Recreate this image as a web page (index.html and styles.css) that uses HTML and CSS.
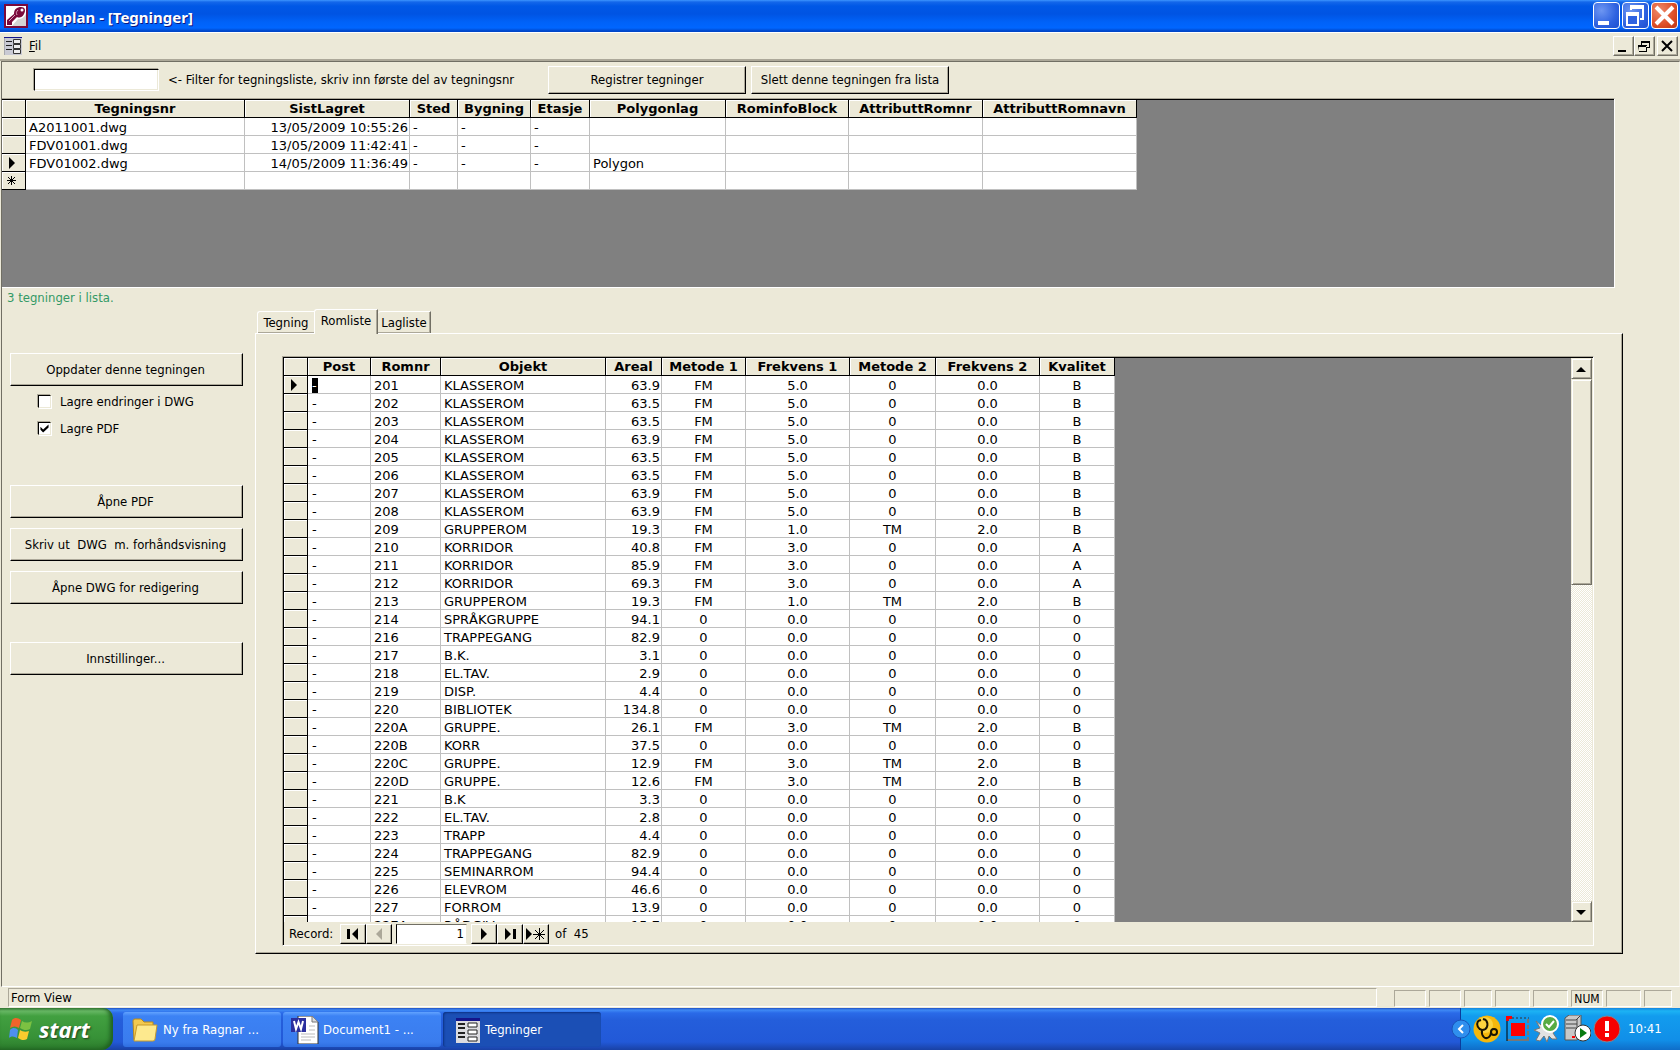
FILE: index.html
```
<!DOCTYPE html>
<html lang="no">
<head>
<meta charset="utf-8">
<title>Renplan - [Tegninger]</title>
<link rel="stylesheet" href="styles.css">
</head>
<body>
<header class="titlebar">
  <svg class="app-icon" viewBox="0 0 24 24" aria-hidden="true"><rect width="24" height="24" fill="#7b0a3c"/><rect x="2" y="2" width="20" height="20" fill="#fff"/><path d="M22 9V22H8L14 15C18 15 21 13 22 9Z" fill="#d4d4d4"/><path d="M3 21V16L10 10C10 5 13 3 17 3C21 3 22 6 20 10C18 14 15 14 13 13L8 18V21Z" fill="#7b0a3c"/><path d="M5 17L11 11M14 6C12 8 12 9 13 11" stroke="#d9a3bb" fill="none"/><circle cx="18" cy="6" r="1.500" fill="#fff"/></svg>
  <h1 class="title">Renplan - [Tegninger]</h1>
  <div class="window-controls">
    <button class="xp-btn" aria-label="Minimize"><svg viewBox="0 0 27 27"><path d="M5 19h11v4H5z" fill="#fff"/></svg></button>
    <button class="xp-btn" aria-label="Restore"><svg viewBox="0 0 27 27"><path d="M9 8V5h12v12h-3" fill="none" stroke="#fff" stroke-width="2"/><path d="M8 3h14v4H8z" fill="#fff"/><rect x="5" y="12" width="11" height="11" fill="#2f62e0" stroke="#fff" stroke-width="2"/><path d="M4 10h13v4H4z" fill="#fff"/></svg></button>
    <button class="xp-btn xp-close" aria-label="Close"><svg viewBox="0 0 27 27"><path d="M5 5L22 22M22 5L5 22" stroke="#fff" stroke-width="4"/></svg></button>
  </div>
</header>
<nav class="menubar">
  <svg class="form-icon" viewBox="0 0 18 18" aria-hidden="true"><rect width="18" height="18" fill="#c9cad4"/><path d="M0 0h18v1H0z" fill="#15158a"/><path d="M0 1v17" stroke="#888"/><path d="M2 4.500h6M2 8.500h6M2 12.500h6" stroke="#222"/><path d="M9.500 2.500h7v4h-7zM9.500 7.500h7v4h-7zM9.500 12.500h7v4h-7z" fill="#eee" stroke="#333"/></svg>
  <a class="menu-item" href="#"><u>F</u>il</a>
  <div class="mdi-controls">
    <button class="mdi-btn" aria-label="Minimize document"><svg viewBox="0 0 20 18"><path d="M4 13h8v2H4z"/></svg></button>
    <button class="mdi-btn" aria-label="Restore document"><svg viewBox="0 0 20 18"><path d="M6 4h9v2H6zM14 5h1v6h-3v-1h2zM6 5h1v4H6zM3 8h9v2H3zM3 9h1v6h8V9h-1v5H4z"/></svg></button>
    <button class="mdi-btn mdi-close" aria-label="Close document"><svg viewBox="0 0 20 18"><path d="M4 4L14 14M14 4L4 14" stroke="#000" stroke-width="2"/></svg></button>
  </div>
</nav>
<main class="form">
  <div class="filterbar">
    <input class="filter-input" id="filter" type="text">
    <label class="filter-label" for="filter">&lt;- Filter for tegningsliste, skriv inn første del av tegningsnr</label>
    <button class="btn filter-btn">Registrer tegninger</button>
    <button class="btn filter-btn">Slett denne tegningen fra lista</button>
  </div>
  <section class="sub sub-top">
    <div class="sub-inner">
      <table class="grid grid-top">
        <colgroup><col class="w24"><col class="w219"><col class="w165"><col class="w48"><col class="w73"><col class="w59"><col class="w136"><col class="w123"><col class="w134"><col class="w154"></colgroup>
        <thead><tr><th></th><th>Tegningsnr</th><th>SistLagret</th><th>Sted</th><th>Bygning</th><th>Etasje</th><th>Polygonlag</th><th>RominfoBlock</th><th>AttributtRomnr</th><th>AttributtRomnavn</th></tr></thead>
        <tbody>
          <tr><td class="sel"></td><td>A2011001.dwg</td><td class="num">13/05/2009 10:55:26</td><td>-</td><td>-</td><td>-</td><td></td><td></td><td></td><td></td></tr>
          <tr><td class="sel"></td><td>FDV01001.dwg</td><td class="num">13/05/2009 11:42:41</td><td>-</td><td>-</td><td>-</td><td></td><td></td><td></td><td></td></tr>
          <tr><td class="sel"><svg class="mark" viewBox="0 0 12 12"><path d="M3 0L9 6L3 12Z"/></svg></td><td>FDV01002.dwg</td><td class="num">14/05/2009 11:36:49</td><td>-</td><td>-</td><td>-</td><td>Polygon</td><td></td><td></td><td></td></tr>
          <tr><td class="sel"><svg class="mark" viewBox="0 0 12 12"><path d="M5.500 1V10M1 5.500H10M2 2L9 9M9 2L2 9" stroke="#000"/></svg></td><td></td><td></td><td></td><td></td><td></td><td></td><td></td><td></td><td></td></tr>
        </tbody>
      </table>
    </div>
  </section>
  <p class="count">3 tegninger i lista.</p>
  <div class="workspace">
    <aside class="actions">
      <button class="btn action">Oppdater denne tegningen</button>
      <div class="checks">
        <label class="check"><input type="checkbox">Lagre endringer i DWG</label>
        <label class="check"><input type="checkbox" checked>Lagre PDF</label>
      </div>
      <div class="stack">
        <button class="btn action">Åpne PDF</button>
        <button class="btn action">Skriv ut&nbsp; DWG&nbsp; m. forhåndsvisning</button>
        <button class="btn action">Åpne DWG for redigering</button>
      </div>
      <button class="btn action">Innstillinger...</button>
    </aside>
    <section class="tabbed">
      <div class="tabs" role="tablist">
        <button class="tab" role="tab">Tegning</button>
        <button class="tab tab-active" role="tab" aria-selected="true">Romliste</button>
        <button class="tab tab-last" role="tab">Lagliste</button>
      </div>
      <div class="panel">
        <div class="sub sub-main">
          <div class="sub-inner">
            <div class="list">
              <div class="list-view">
                <table class="grid grid-rooms">
                  <colgroup><col class="w24"><col class="w63"><col class="w70"><col class="w165"><col class="w56"><col class="w84"><col class="w104"><col class="w86"><col class="w104"><col class="w75"></colgroup>
                  <thead><tr><th></th><th>Post</th><th>Romnr</th><th>Objekt</th><th>Areal</th><th>Metode 1</th><th>Frekvens 1</th><th>Metode 2</th><th>Frekvens 2</th><th>Kvalitet</th></tr></thead>
                  <tbody>
                    <tr><td class="sel"><svg class="mark" viewBox="0 0 12 12"><path d="M3 0L9 6L3 12Z"/></svg></td><td><span class="picked">-</span></td><td>201</td><td>KLASSEROM</td><td>63.9</td><td>FM</td><td>5.0</td><td>0</td><td>0.0</td><td>B</td></tr>
                    <tr><td class="sel"></td><td>-</td><td>202</td><td>KLASSEROM</td><td>63.5</td><td>FM</td><td>5.0</td><td>0</td><td>0.0</td><td>B</td></tr>
                    <tr><td class="sel"></td><td>-</td><td>203</td><td>KLASSEROM</td><td>63.5</td><td>FM</td><td>5.0</td><td>0</td><td>0.0</td><td>B</td></tr>
                    <tr><td class="sel"></td><td>-</td><td>204</td><td>KLASSEROM</td><td>63.9</td><td>FM</td><td>5.0</td><td>0</td><td>0.0</td><td>B</td></tr>
                    <tr><td class="sel"></td><td>-</td><td>205</td><td>KLASSEROM</td><td>63.5</td><td>FM</td><td>5.0</td><td>0</td><td>0.0</td><td>B</td></tr>
                    <tr><td class="sel"></td><td>-</td><td>206</td><td>KLASSEROM</td><td>63.5</td><td>FM</td><td>5.0</td><td>0</td><td>0.0</td><td>B</td></tr>
                    <tr><td class="sel"></td><td>-</td><td>207</td><td>KLASSEROM</td><td>63.9</td><td>FM</td><td>5.0</td><td>0</td><td>0.0</td><td>B</td></tr>
                    <tr><td class="sel"></td><td>-</td><td>208</td><td>KLASSEROM</td><td>63.9</td><td>FM</td><td>5.0</td><td>0</td><td>0.0</td><td>B</td></tr>
                    <tr><td class="sel"></td><td>-</td><td>209</td><td>GRUPPEROM</td><td>19.3</td><td>FM</td><td>1.0</td><td>TM</td><td>2.0</td><td>B</td></tr>
                    <tr><td class="sel"></td><td>-</td><td>210</td><td>KORRIDOR</td><td>40.8</td><td>FM</td><td>3.0</td><td>0</td><td>0.0</td><td>A</td></tr>
                    <tr><td class="sel"></td><td>-</td><td>211</td><td>KORRIDOR</td><td>85.9</td><td>FM</td><td>3.0</td><td>0</td><td>0.0</td><td>A</td></tr>
                    <tr><td class="sel"></td><td>-</td><td>212</td><td>KORRIDOR</td><td>69.3</td><td>FM</td><td>3.0</td><td>0</td><td>0.0</td><td>A</td></tr>
                    <tr><td class="sel"></td><td>-</td><td>213</td><td>GRUPPEROM</td><td>19.3</td><td>FM</td><td>1.0</td><td>TM</td><td>2.0</td><td>B</td></tr>
                    <tr><td class="sel"></td><td>-</td><td>214</td><td>SPRÅKGRUPPE</td><td>94.1</td><td>0</td><td>0.0</td><td>0</td><td>0.0</td><td>0</td></tr>
                    <tr><td class="sel"></td><td>-</td><td>216</td><td>TRAPPEGANG</td><td>82.9</td><td>0</td><td>0.0</td><td>0</td><td>0.0</td><td>0</td></tr>
                    <tr><td class="sel"></td><td>-</td><td>217</td><td>B.K.</td><td>3.1</td><td>0</td><td>0.0</td><td>0</td><td>0.0</td><td>0</td></tr>
                    <tr><td class="sel"></td><td>-</td><td>218</td><td>EL.TAV.</td><td>2.9</td><td>0</td><td>0.0</td><td>0</td><td>0.0</td><td>0</td></tr>
                    <tr><td class="sel"></td><td>-</td><td>219</td><td>DISP.</td><td>4.4</td><td>0</td><td>0.0</td><td>0</td><td>0.0</td><td>0</td></tr>
                    <tr><td class="sel"></td><td>-</td><td>220</td><td>BIBLIOTEK</td><td>134.8</td><td>0</td><td>0.0</td><td>0</td><td>0.0</td><td>0</td></tr>
                    <tr><td class="sel"></td><td>-</td><td>220A</td><td>GRUPPE.</td><td>26.1</td><td>FM</td><td>3.0</td><td>TM</td><td>2.0</td><td>B</td></tr>
                    <tr><td class="sel"></td><td>-</td><td>220B</td><td>KORR</td><td>37.5</td><td>0</td><td>0.0</td><td>0</td><td>0.0</td><td>0</td></tr>
                    <tr><td class="sel"></td><td>-</td><td>220C</td><td>GRUPPE.</td><td>12.9</td><td>FM</td><td>3.0</td><td>TM</td><td>2.0</td><td>B</td></tr>
                    <tr><td class="sel"></td><td>-</td><td>220D</td><td>GRUPPE.</td><td>12.6</td><td>FM</td><td>3.0</td><td>TM</td><td>2.0</td><td>B</td></tr>
                    <tr><td class="sel"></td><td>-</td><td>221</td><td>B.K</td><td>3.3</td><td>0</td><td>0.0</td><td>0</td><td>0.0</td><td>0</td></tr>
                    <tr><td class="sel"></td><td>-</td><td>222</td><td>EL.TAV.</td><td>2.8</td><td>0</td><td>0.0</td><td>0</td><td>0.0</td><td>0</td></tr>
                    <tr><td class="sel"></td><td>-</td><td>223</td><td>TRAPP</td><td>4.4</td><td>0</td><td>0.0</td><td>0</td><td>0.0</td><td>0</td></tr>
                    <tr><td class="sel"></td><td>-</td><td>224</td><td>TRAPPEGANG</td><td>82.9</td><td>0</td><td>0.0</td><td>0</td><td>0.0</td><td>0</td></tr>
                    <tr><td class="sel"></td><td>-</td><td>225</td><td>SEMINARROM</td><td>94.4</td><td>0</td><td>0.0</td><td>0</td><td>0.0</td><td>0</td></tr>
                    <tr><td class="sel"></td><td>-</td><td>226</td><td>ELEVROM</td><td>46.6</td><td>0</td><td>0.0</td><td>0</td><td>0.0</td><td>0</td></tr>
                    <tr><td class="sel"></td><td>-</td><td>227</td><td>FORROM</td><td>13.9</td><td>0</td><td>0.0</td><td>0</td><td>0.0</td><td>0</td></tr>
                    <tr><td class="sel"></td><td></td><td>227A</td><td>RÅDGIV.</td><td>15.7</td><td>0</td><td>0.0</td><td>0</td><td>0.0</td><td>0</td></tr>
                  </tbody>
                </table>
              </div>
              <div class="scrollbar">
                <button class="scroll-btn" aria-label="Scroll up"><svg viewBox="0 0 10 10"><path d="M5 3L10 8H0Z"/></svg></button>
                <div class="thumb"></div>
                <div class="track"></div>
                <button class="scroll-btn" aria-label="Scroll down"><svg viewBox="0 0 10 10"><path d="M5 8L10 3H0Z"/></svg></button>
              </div>
            </div>
            <div class="record-nav">
              <label class="record-label" for="record">Record:</label>
              <button class="nav-btn" aria-label="First"><svg viewBox="0 0 20 14"><path d="M4 2h3v10H4zM15 1v12L9 7z"/></svg></button>
              <button class="nav-btn" aria-label="Previous" disabled><svg viewBox="0 0 20 14"><path d="M13 1v12L7 7z" fill="#aca899"/></svg></button>
              <input class="record-input" id="record" type="text" value="1">
              <button class="nav-btn" aria-label="Next"><svg viewBox="0 0 20 14"><path d="M7 1v12L13 7z"/></svg></button>
              <button class="nav-btn" aria-label="Last"><svg viewBox="0 0 20 14"><path d="M5 1v12L11 7zM13 2h3v10h-3z"/></svg></button>
              <button class="nav-btn" aria-label="New record"><svg viewBox="0 0 20 14"><path d="M0 1v12L6 7z"/><path d="M13.500 1v12M7 7.500h12M9 3l9 9M18 3l-9 9" stroke="#000"/></svg></button>
              <span class="record-total">of&nbsp; 45</span>
            </div>
          </div>
        </div>
      </div>
    </section>
  </div>
</main>
<footer class="statusbar">
  <div class="status-text">Form View</div>
  <div class="status-cells"><span class="cell"></span><span class="cell"></span><span class="cell cell-narrow"></span><span class="cell cell-wide"></span><span class="cell cell-wide"></span><span class="cell">NUM</span><span class="cell cell-wide"></span><span class="cell cell-narrow"></span></div>
</footer>
<div class="taskbar">
  <button class="start"><svg class="flag" viewBox="0 0 24 26" aria-hidden="true"><path d="M3 4C6 1 9 2 12 4L10 12C7 10 4 10 1 12Z" fill="#f0642b"/><path d="M13 5C16 7 19 7 23 5L21 13C18 15 14 14 11 12Z" fill="#7cc142"/><path d="M1 14C4 11 7 12 9 14L8 22C5 20 2 20 0 22Z" fill="#4e8ff0"/><path d="M11 14C14 16 17 16 20 15L18 23C15 25 12 24 9 22Z" fill="#fbcb2e"/></svg><span>start</span></button>
  <div class="tasks">
    <button class="task"><svg viewBox="0 0 28 28" aria-hidden="true"><path d="M2 5Q2 3 4 3H10L13 6H22V24H3Z" fill="#f3c94f" stroke="#b98a1d"/><path d="M3 25L6 9H26L24 23Q24 25 22 25Z" fill="#fde98e" stroke="#c79a2b"/></svg><span>Ny fra Ragnar ...</span></button>
    <button class="task"><svg viewBox="0 0 28 28" aria-hidden="true"><path d="M7 0H21L27 6V28H7Z" fill="#fff" stroke="#333"/><path d="M21 0V6H27" fill="#ddd" stroke="#777"/><path d="M10 18H24M10 21H24M10 24H20M18 10H24M18 14H24" stroke="#bbb"/><rect x="0" y="2" width="15" height="14" fill="#2b2f9e"/><path d="M3 5L5 13L7.500 6L10 13L12 5" fill="none" stroke="#fff" stroke-width="2"/></svg><span>Document1 - ...</span></button>
    <button class="task task-active"><svg viewBox="0 0 28 28" aria-hidden="true"><rect x="3" y="2" width="24" height="25" fill="#dcdce0"/><path d="M3 2h24v3H3z" fill="#15158a"/><path d="M5 8h7M5 12h7M5 17h7M5 21h7" stroke="#222" stroke-width="2"/><path d="M15 7h9v4h-9zM15 14h9v4h-9zM15 21h9v4h-9z" fill="#fff" stroke="#222"/></svg><span>Tegninger</span></button>
  </div>
  <div class="tray">
    <svg class="chevron" viewBox="0 0 20 20" aria-hidden="true"><circle cx="10" cy="10" r="9" fill="#2f8fee" stroke="#1b55b8"/><path d="M12 6L8 10L12 14" fill="none" stroke="#fff" stroke-width="2"/></svg>
    <svg viewBox="0 0 28 28" aria-hidden="true"><circle cx="14" cy="14" r="13.500" fill="#f5b80c"/><circle cx="12" cy="10" r="8" fill="#fbd33e"/><path d="M5 6C3 10 5 14 9 15C14 15 16 10 13 5M5 6L8 5M13 5L10 4M9 15C8 21 12 25 16 22C19 20 17 16 20 14" fill="none" stroke="#1a1503" stroke-width="2"/><circle cx="21" cy="17" r="3" fill="#f5b80c" stroke="#1a1503" stroke-width="2"/></svg>
    <svg viewBox="0 0 28 28" aria-hidden="true"><path d="M4 25H26" stroke="#777" stroke-width="2"/><path d="M9 3H26" stroke="#333" stroke-dasharray="2 2"/><path d="M25 4V26" stroke="#777" stroke-width="2" stroke-dasharray="4 2"/><path d="M4 3v23" stroke="#000"/><path d="M3 1h6v3H6v2H3z" fill="#f00"/><rect x="8" y="8" width="14" height="13" fill="#f00"/></svg>
    <svg viewBox="0 0 28 28" aria-hidden="true"><path d="M3 6L8 10L11 7L18 12L24 13L20 18L24 24H19L16 21L14 27L11 21L7 26L3 25L7 18L1 15L7 13Z" fill="#e2e2e2" stroke="#777"/><circle cx="17" cy="9" r="8" fill="#58ab43" stroke="#fff" stroke-width="2"/><path d="M13 9L16 12L21 6" fill="none" stroke="#fff" stroke-width="2"/></svg>
    <svg viewBox="0 0 28 28" aria-hidden="true"><path d="M2 3L6 0H18V20L14 25H2Z" fill="#c8c8c8" stroke="#555"/><path d="M3 5H13L17 1M3 9H14M3 13H14M14 4V24" stroke="#444" fill="none"/><path d="M9 21h3v2H9z" fill="#f00"/><circle cx="20" cy="18" r="8" fill="#fff" stroke="#333"/><path d="M17 13L24 18L17 23Z" fill="#067a12"/></svg>
    <svg viewBox="0 0 28 28" aria-hidden="true"><circle cx="14" cy="14" r="13" fill="#f80000" stroke="#7d8794"/><path d="M12 6h4v10h-4zM12 18h4v4h-4z" fill="#fff"/></svg>
    <time class="clock">10:41</time>
  </div>
</div>
</body>
</html>
```
FILE: styles.css
```
* { box-sizing: border-box; }

body {
  margin: 0;
  height: 100vh;
  display: flex;
  flex-direction: column;
  overflow: hidden;
  background: #ece9d8;
  color: #000;
  font: 13px/16px "DejaVu Sans Condensed", Tahoma, "DejaVu Sans", sans-serif;
}

button, input { font: inherit; color: inherit; border-radius: 0; }
button { padding: 0; border: 0; background: #ece9d8; display: flex; align-items: center; justify-content: center; white-space: nowrap; }
svg { display: block; flex: none; }

/* Title bar */
.titlebar {
  height: 32px;
  flex: none;
  display: flex;
  align-items: center;
  padding: 0 2px 1px 4px;
  background: linear-gradient(#3d95ff 0, #1467ea 2px, #0058e6 6px, #0054e3 14px, #0062f8 22px, #0066ff 28px, #0046c8 31px);
}
.app-icon { width: 24px; height: 24px; }
.title {
  flex: 1;
  margin: 0 0 0 6px;
  padding-top: 2px;
  color: #fff;
  font: bold 15px/24px "Noto Sans", "Open Sans", sans-serif;
  text-shadow: 1px 1px 0 #0a1883;
}
.window-controls { display: flex; gap: 2px; }
.xp-btn {
  width: 27px;
  height: 27px;
  border: 1px solid #fff;
  border-radius: 4px;
  background: radial-gradient(circle at 30% 30%, #6d96f2, #2f62e0 60%, #1c4fd0);
}
.xp-btn svg { width: 27px; height: 27px; }
.xp-close { background: radial-gradient(circle at 30% 30%, #ee8a6c, #dd4f28 60%, #b93614); }

/* Menu bar */
.menubar {
  height: 29px;
  flex: none;
  display: flex;
  align-items: center;
  padding: 0 2px 0 4px;
  border-top: 1px solid #fff;
  border-bottom: 2px solid #aca899;
}
.form-icon { width: 18px; height: 18px; }
.menu-item { flex: 1; margin-left: 7px; color: #000; text-decoration: none; }
.mdi-controls { display: flex; }
.mdi-btn {
  width: 21px;
  height: 20px;
  border: 1px solid;
  border-color: #fff #716f64 #716f64 #fff;
  box-shadow: inset -1px -1px #aca899;
}
.mdi-btn svg { width: 20px; height: 18px; }
.mdi-close { margin-left: 2px; }

/* Form area */
.form {
  flex: 1;
  min-height: 0;
  display: flex;
  flex-direction: column;
  border: 1px solid;
  border-color: #716f64 #f4f2e8 #fff #716f64;
  margin-left: 1px;
}
.btn {
  border: 1px solid;
  border-color: #fff #000 #000 #fff;
  box-shadow: inset -1px -1px #aca899;
}
.filterbar { height: 36px; flex: none; display: flex; align-items: center; padding: 0 0 0 32px; }
.filter-input {
  width: 125px;
  height: 22px;
  padding: 0 2px;
  border: 1px solid;
  border-color: #000 #fff #fff #000;
  background: #fff;
  box-shadow: inset -1px -1px #ece9d8, -1px -1px #aca899;
}
.filter-label { width: 380px; margin-left: 9px; white-space: nowrap; }
.filter-btn { width: 198px; height: 28px; margin-right: 5px; }

.sub { border: 1px solid; border-color: #aca899 #fff #fff #aca899; }
.sub-inner { height: 100%; border: solid #000; border-width: 1px 0 0 1px; }
.sub-top { height: 190px; flex: none; margin-right: 64px; border-left: 0; }
.sub-top .sub-inner { background: #808080; border-left: 0; }

/* Data grids */
.grid {
  table-layout: fixed;
  border-collapse: separate;
  border-spacing: 0;
  background: #fff;
  font: 13px/15px "DejaVu Sans", Verdana, sans-serif;
}
.grid-top { width: 1135px; }
.grid-rooms { width: 831px; }
.grid th, .grid td { height: 18px; padding: 2px 3px 0; overflow: hidden; white-space: nowrap; text-align: left; }
.grid th {
  padding: 1px 0;
  background: #ece9d8;
  border: solid #000;
  border-width: 0 1px 1px 0;
  box-shadow: inset 1px 1px #fff;
  text-align: center;
  font-weight: bold;
}
.grid td { border: solid #c0c0c0; border-width: 0 1px 1px 0; }
.grid td.num { text-align: right; padding-right: 1px; }
.grid td.sel { background: #ece9d8; border-color: #000; box-shadow: inset 1px 1px #fff; padding: 0 3px; }
.mark { width: 12px; height: 12px; margin-left: 1px; }
.grid-rooms td:nth-child(n+5) { text-align: center; }
.grid-rooms td:nth-child(5) { text-align: right; padding-right: 1px; }
.grid-rooms td:nth-child(2) { padding-left: 4px; }
.picked { display: block; width: 6px; height: 15px; background: #000; color: #fff; }
.w24 { width: 24px; }
.w48 { width: 48px; }
.w56 { width: 56px; }
.w59 { width: 59px; }
.w63 { width: 63px; }
.w70 { width: 70px; }
.w73 { width: 73px; }
.w75 { width: 75px; }
.w84 { width: 84px; }
.w86 { width: 86px; }
.w104 { width: 104px; }
.w123 { width: 123px; }
.w134 { width: 134px; }
.w136 { width: 136px; }
.w154 { width: 154px; }
.w165 { width: 165px; }
.w219 { width: 219px; }

.count { height: 21px; flex: none; margin: 0; padding: 2px 5px; color: #339966; }

/* Lower half: action column and tabbed panel */
.workspace { flex: 1; min-height: 0; display: flex; padding: 0 56px 32px 8px; }
.actions { width: 233px; flex: none; padding-top: 44px; }
.action { width: 100%; height: 33px; padding-right: 2px; }
.checks { margin: 2px 0 43px 28px; }
.check { display: flex; align-items: center; gap: 9px; height: 27px; }
.check input {
  appearance: none;
  width: 13px;
  height: 13px;
  margin: 0;
  border: 1px solid;
  border-color: #000 #ece9d8 #ece9d8 #000;
  background: #fff;
  box-shadow: -1px -1px #aca899, 1px 1px #fff;
}
.check input:checked { display: grid; place-items: center; }
.check input:checked::before { content: ""; width: 9px; height: 9px; background: #000; clip-path: polygon(5% 30%, 35% 60%, 95% 5%, 95% 40%, 35% 95%, 5% 65%); }
.stack { display: flex; flex-direction: column; gap: 10px; margin-bottom: 38px; }

.tabbed { flex: 1; min-width: 0; display: flex; flex-direction: column; margin-left: 12px; }
.tabs { display: flex; align-items: flex-end; height: 24px; flex: none; padding-left: 2px; }
.tab {
  height: 22px;
  width: 57px;
  border: solid #fff;
  border-width: 1px 0 0 1px;
  border-radius: 3px 0 0 0;
  box-shadow: inset 0 -1px #aca899;
}
.tab-active {
  height: 25px;
  width: 64px;
  margin-bottom: -1px;
  padding-bottom: 2px;
  border-right: 1px solid #716f64;
  box-shadow: inset -1px 0 #aca899;
  position: relative;
}
.tab-last { width: 53px; border-left: 0; border-right: 1px solid #716f64; box-shadow: inset -1px -1px #aca899; }
.panel {
  flex: 1;
  min-height: 0;
  padding: 22px 28px 7px 26px;
  border: 1px solid;
  border-color: #fff #000 #000 #fff;
  box-shadow: inset -1px -1px #aca899;
}
.sub-main { height: 100%; }
.sub-main .sub-inner { display: flex; flex-direction: column; }
.list { flex: 1; min-height: 0; display: flex; padding-right: 1px; }
.list-view { flex: 1; min-width: 0; overflow: hidden; background: #808080; }

.scrollbar { width: 21px; flex: none; display: flex; flex-direction: column; }
.scroll-btn, .thumb {
  border: 1px solid;
  border-color: #ece9d8 #716f64 #716f64 #ece9d8;
  box-shadow: inset 1px 1px #fff, inset -1px -1px #aca899;
}
.scroll-btn { width: 21px; height: 21px; padding-right: 2px; }
.scroll-btn svg { width: 10px; height: 10px; }
.thumb { height: 206px; }
.track { flex: 1; background: repeating-conic-gradient(#ece9d8 0 25%, #fff 0 50%) 0 0 / 2px 2px; }

.record-nav { height: 23px; flex: none; display: flex; align-items: center; padding-left: 5px; }
.record-label { width: 51px; }
.nav-btn {
  width: 26px;
  height: 20px;
  border: 1px solid;
  border-color: #fff #000 #000 #fff;
  box-shadow: inset -1px -1px #aca899;
}
.nav-btn svg { width: 20px; height: 14px; }
.record-input {
  width: 71px;
  height: 20px;
  margin: 0 4px;
  padding: 0 2px;
  border: 1px solid;
  border-color: #716f64 #ece9d8 #fff #000;
  background: #fff;
  text-align: right;
}
.record-total { margin-left: 6px; }

/* Status bar */
.statusbar { height: 21px; flex: none; display: flex; align-items: flex-start; padding: 1px 8px 0 8px; }
.status-text { flex: 1; height: 19px; padding: 1px 2px; border: 1px solid; border-color: #aca899 #fff #fff #aca899; }
.status-cells { display: flex; gap: 3px; margin: 2px 0 0 17px; }
.cell { width: 32px; height: 17px; border: 1px solid; border-color: #aca899 #fff #fff #aca899; font-size: 12px; text-align: center; }
.cell-narrow { width: 28px; }
.cell-wide { width: 35px; }

/* Taskbar */
.taskbar {
  height: 42px;
  flex: none;
  display: flex;
  background: linear-gradient(#1f4fc0 0, #3f8af5 2px, #2a6ae8 5px, #245edb 12px, #2259d8 34px, #1941a5 42px);
  color: #fff;
}
.taskbar button { color: #fff; }
.start {
  width: 113px;
  gap: 6px;
  padding: 0 14px 0 0;
  border-radius: 0 10px 12px 0;
  background: linear-gradient(#3b7f3a 0, #68b865 3px, #42a040 8px, #379137 30px, #2b7a2b 42px);
  box-shadow: inset -3px -1px 4px #1f5f20;
  font: italic bold 22px/26px "Open Sans", "Noto Sans", sans-serif;
  text-shadow: 1px 1px 2px #1c3f1c;
}
.flag { width: 24px; height: 26px; }
.tasks { flex: 1; display: flex; gap: 2px; padding: 4px 0 3px 10px; }
.task {
  width: 158px;
  justify-content: flex-start;
  gap: 4px;
  padding-left: 8px;
  border-radius: 3px;
  background: linear-gradient(#62a3ff 0, #3c82f4 4px, #3a7cee 30px, #2f6ee0 35px);
}
.task svg { width: 28px; height: 28px; }
.task-active { background: #1b4fb5; box-shadow: inset 1px 1px 2px #0d3384; padding-left: 10px; }
.tray {
  width: 220px;
  display: flex;
  align-items: center;
  gap: 2px;
  border-left: 1px solid #0b3c9c;
  background: linear-gradient(#1584df 0, #1cb3f4 3px, #129cee 8px, #118fe8 32px, #0f6dc8 42px);
}
.tray svg { width: 28px; height: 28px; }
.tray svg.chevron { width: 20px; height: 20px; margin-left: -10px; }
.clock { margin-left: 5px; }
```
